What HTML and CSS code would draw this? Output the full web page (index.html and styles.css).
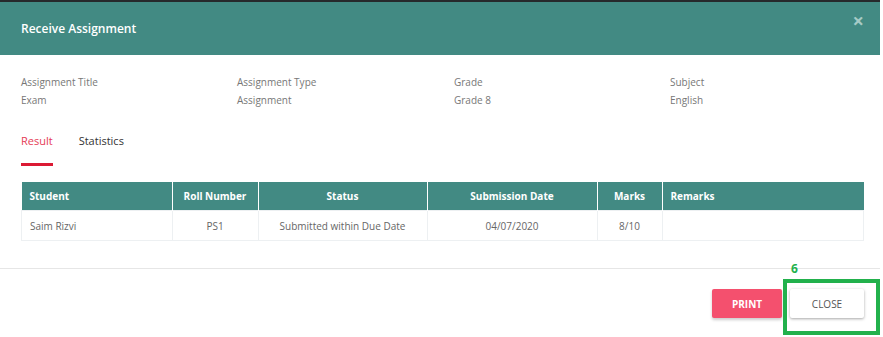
FILE: index.html
```html
<!DOCTYPE html>
<html lang="en">
<head>
  <meta charset="UTF-8">
  <title>Receive Assignment</title>
  <link rel="stylesheet" href="styles.css">
</head>
<body>
  <div class="backdrop-strip"></div>
  <div class="modal">
    <header class="modal-header">
      <h2 class="modal-title">Receive Assignment</h2>
      <span class="modal-close">&times;</span>
    </header>

    <div class="modal-body">
      <div class="info-grid">
        <div class="info-item">
          <p class="info-label">Assignment Title</p>
          <p class="info-value">Exam</p>
        </div>
        <div class="info-item">
          <p class="info-label">Assignment Type</p>
          <p class="info-value">Assignment</p>
        </div>
        <div class="info-item">
          <p class="info-label">Grade</p>
          <p class="info-value">Grade 8</p>
        </div>
        <div class="info-item">
          <p class="info-label">Subject</p>
          <p class="info-value">English</p>
        </div>
      </div>

      <div class="tabs">
        <span class="tab tab--active">Result</span>
        <span class="tab">Statistics</span>
      </div>

      <table class="result-table">
        <thead>
          <tr>
            <th class="col-student">Student</th>
            <th class="col-roll center">Roll Number</th>
            <th class="col-status center">Status</th>
            <th class="col-date center">Submission Date</th>
            <th class="col-marks center">Marks</th>
            <th>Remarks</th>
          </tr>
        </thead>
        <tbody>
          <tr>
            <td>Saim Rizvi</td>
            <td class="center">PS1</td>
            <td class="center">Submitted within Due Date</td>
            <td class="center">04/07/2020</td>
            <td class="center">8/10</td>
            <td></td>
          </tr>
        </tbody>
      </table>
    </div>

    <footer class="modal-footer">
      <button class="btn btn-print">PRINT</button>
      <button class="btn btn-close">CLOSE</button>
      <div class="highlight-box"></div>
      <span class="highlight-label">6</span>
    </footer>
  </div>
</body>
</html>
```

FILE: styles.css
```css
body {
  margin: 0;
  padding: 0;
  background: #fff;
  font-family: "Open Sans", Arial, sans-serif;
}
.backdrop-strip {
  height: 2px;
  width: 880px;
  background: #26292b;
}
.modal {
  width: 880px;
  background: #fff;
}
.modal-header {
  height: 53px;
  background: #428a83;
  display: flex;
  align-items: center;
  justify-content: space-between;
  padding: 0 16px 0 21px;
}
.modal-title {
  margin: 0;
  color: #fff;
  font-size: 12px;
  font-weight: 600;
}
.modal-close {
  color: #a6cac6;
  font-size: 20px;
  font-weight: bold;
  line-height: 1;
  margin-top: -16px;
}
.modal-body {
  padding: 18px 16px 0 21px;
}
.info-grid {
  display: grid;
  grid-template-columns: 216px 217px 216px auto;
}
.info-label,
.info-value {
  margin: 0;
  font-size: 10px;
  color: #777;
  line-height: 18px;
}
.tabs {
  display: flex;
  margin-top: 15px;
}
.tab {
  font-size: 11px;
  color: #333;
  padding: 9px 0 15px;
  margin-right: 26px;
}
.tab--active {
  color: #e53b55;
  border-bottom: 3px solid #db1a34;
}
.result-table {
  width: 100%;
  margin-top: 16px;
  border-collapse: collapse;
  font-size: 10px;
}
.result-table th {
  background: #428a83;
  color: #fff;
  font-weight: 700;
  height: 28px;
  padding: 0 8px;
  text-align: left;
  border-left: 1px solid #fff;
}
.result-table th:first-child {
  border-left: none;
}
.result-table td {
  height: 29px;
  padding: 0 8px;
  color: #666;
  border: 1px solid #edf0f2;
}
.result-table .center {
  text-align: center;
}
.col-student { width: 134px; }
.col-roll { width: 69px; }
.col-status { width: 152px; }
.col-date { width: 153px; }
.col-marks { width: 48px; }
.modal-footer {
  position: relative;
  margin-top: 27px;
  border-top: 1px solid #e6e6e6;
  padding: 20px 16px 20px 0;
  display: flex;
  justify-content: flex-end;
  gap: 8px;
}
.btn {
  height: 29px;
  border: none;
  border-radius: 2px;
  font-family: inherit;
  font-size: 10px;
  cursor: pointer;
}
.btn-print {
  width: 70px;
  background: #f4506e;
  color: #fff;
  font-weight: 700;
  box-shadow: 0 2px 3px rgba(0,0,0,0.2);
}
.btn-close {
  width: 74px;
  background: #fff;
  color: #555;
  box-shadow: 0 1px 3px rgba(0,0,0,0.35);
}
.highlight-box {
  position: absolute;
  left: 783px;
  top: 10px;
  width: 89px;
  height: 48px;
  border: 4px solid #22b14c;
}
.highlight-label {
  position: absolute;
  left: 791px;
  top: -9px;
  color: #22b14c;
  font-size: 12px;
  font-weight: 700;
}
```
